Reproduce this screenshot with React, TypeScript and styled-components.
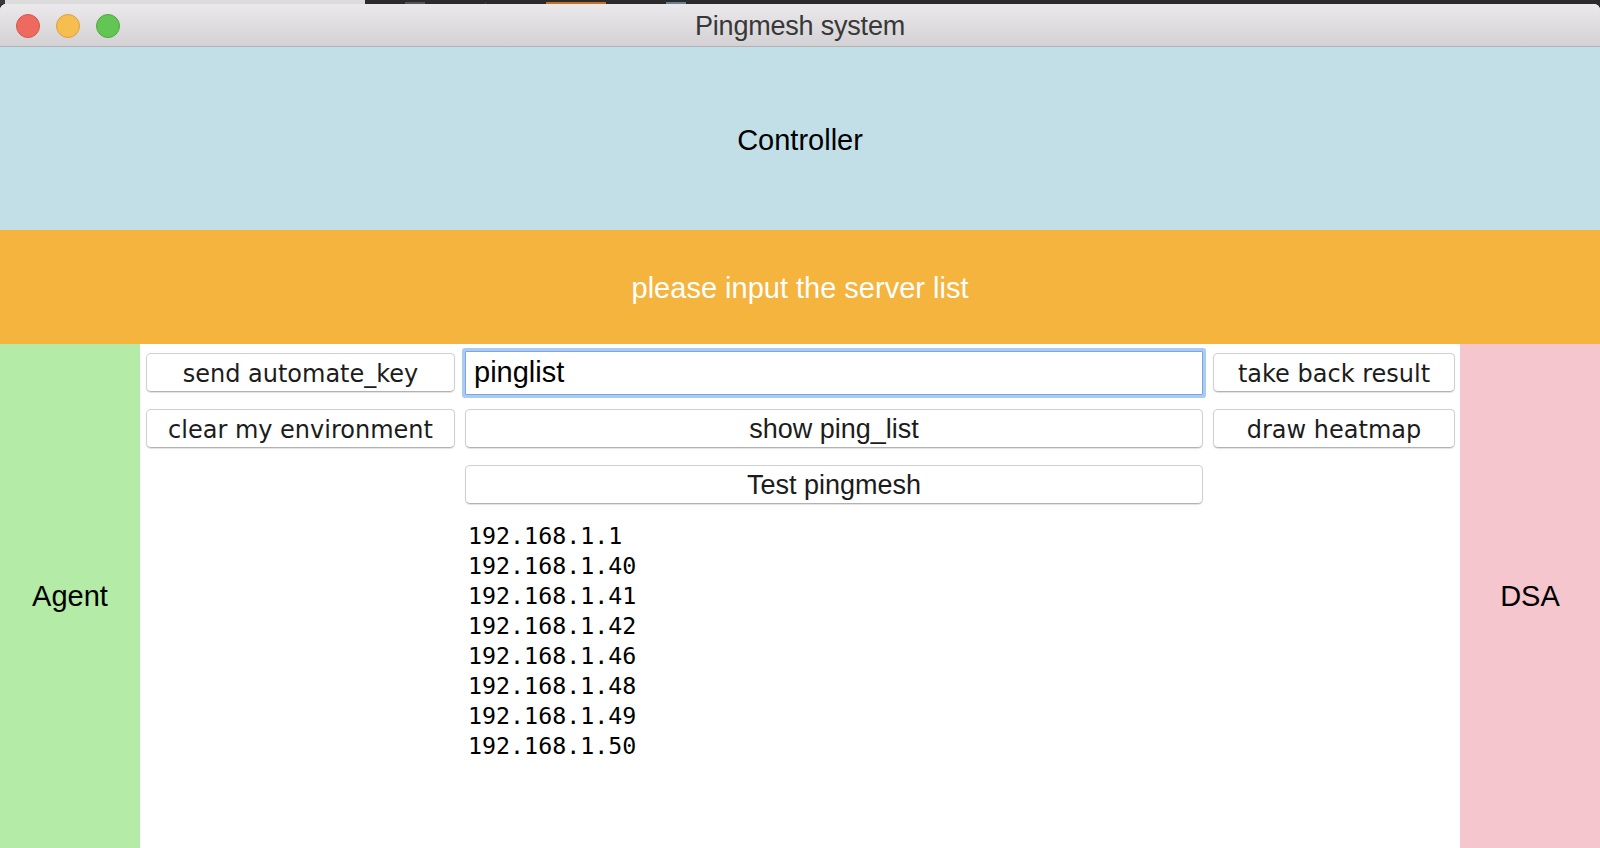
import React from "react";
import styled, { createGlobalStyle } from "styled-components";

const GlobalStyle = createGlobalStyle`
  html, body {
    margin: 0;
    padding: 0;
    width: 1600px;
    height: 848px;
    overflow: hidden;
    background: #2b2b2b;
  }
  #root {
    width: 1600px;
    height: 848px;
  }
  * { box-sizing: border-box; }
`;

const Screen = styled.div`
  width: 1600px;
  height: 848px;
  display: flex;
  flex-direction: column;
  background: #2b2b2b;
`;

const Backdrop = styled.div`
  height: 4px;
  display: flex;
  flex-shrink: 0;
  overflow: hidden;
`;

const BackdropPane = styled.div<{ $light?: boolean; $w?: number }>`
  height: 100%;
  ${(p) => (p.$w ? `width: ${p.$w}px;` : "flex: 1;")}
  background: ${(p) => (p.$light ? "#dcdcdc" : "#2b2b2b")};
  border-left: ${(p) => (p.$light ? "5px solid #3a3a3a" : "none")};
  display: flex;
  align-items: flex-end;
  gap: 60px;
  padding-left: 40px;
`;

const BackdropMark = styled.span<{ $color: string; $w: number }>`
  display: block;
  width: ${(p) => p.$w}px;
  height: 2px;
  background: ${(p) => p.$color};
`;

const Window = styled.div`
  flex: 1;
  display: flex;
  flex-direction: column;
  border-radius: 6px 6px 0 0;
  overflow: hidden;
  background: #ffffff;
`;

const TitleBar = styled.div`
  height: 43px;
  flex-shrink: 0;
  display: grid;
  grid-template-columns: 200px 1fr 200px;
  align-items: center;
  background: linear-gradient(#ebe9eb, #d3d1d3);
  border-bottom: 1px solid #b3b1b3;
`;

const Lights = styled.div`
  display: flex;
  gap: 16px;
  padding: 2px 0 0 16px;
`;

const Light = styled.span<{ $fill: string; $edge: string }>`
  width: 24px;
  height: 24px;
  border-radius: 50%;
  background: ${(p) => p.$fill};
  border: 1px solid ${(p) => p.$edge};
`;

const Title = styled.div`
  text-align: center;
  font-family: "Liberation Sans", Arial, sans-serif;
  font-size: 27px;
  color: #383838;
  letter-spacing: -0.2px;
  padding-top: 3px;
`;

const Band = styled.div<{ $bg: string; $fg: string; $h: number }>`
  height: ${(p) => p.$h}px;
  flex-shrink: 0;
  background: ${(p) => p.$bg};
  color: ${(p) => p.$fg};
  display: flex;
  align-items: center;
  justify-content: center;
  font-family: "Liberation Sans", Arial, sans-serif;
  font-size: 29px;
  padding-top: 3px;
`;

const Body = styled.div`
  flex: 1;
  display: grid;
  grid-template-columns: 140px 1fr 140px;
`;

const SideColumn = styled.div<{ $bg: string }>`
  background: ${(p) => p.$bg};
  display: flex;
  align-items: center;
  justify-content: center;
  font-family: "Liberation Sans", Arial, sans-serif;
  font-size: 29px;
  color: #000;
`;

const Workspace = styled.div`
  background: #fff;
  padding: 4px 5px 0 6px;
  display: grid;
  grid-template-columns: 309px 738px 242px;
  grid-template-rows: 49px 39px 44px auto;
  column-gap: 10px;
  row-gap: 12px;
  align-content: start;
  align-items: center;
  & > :nth-child(1),
  & > :nth-child(4) {
    margin-right: 1px;
  }
`;

const Button = styled.button<{ $variant?: "lucida" | "helv" }>`
  height: 39px;
  width: 100%;
  margin: 0;
  padding: 2px 0 0 0;
  background: #ffffff;
  border: 1px solid #cfcfcf;
  border-bottom-color: #b2b2b2;
  border-radius: 5px;
  box-shadow: 0 1px 1px rgba(0, 0, 0, 0.12);
  color: #1c1c1c;
  font-family: ${(p) =>
    p.$variant === "helv"
      ? `"Liberation Sans", Arial, sans-serif`
      : `"DejaVu Sans", Verdana, sans-serif`};
  font-size: ${(p) => (p.$variant === "helv" ? "27px" : "24px")};
  line-height: 1;
  cursor: default;
`;

const BottomCell = styled.div`
  align-self: end;
`;

const PathInput = styled.input`
  height: 44px;
  width: 738px;
  margin: 0;
  padding: 0 0 0 8px;
  border: 1px solid #7ea6da;
  border-radius: 1px;
  box-shadow: 0 0 0 3px #a9cbf4;
  outline: none;
  background: #fff;
  color: #000;
  font-family: "Liberation Sans", Arial, sans-serif;
  font-size: 29px;
`;

const IpList = styled.pre`
  grid-column: 2;
  margin: 5px 0 0 0;
  padding-left: 3px;
  font-family: "DejaVu Sans Mono", Menlo, monospace;
  font-size: 23.3px;
  line-height: 30px;
  color: #000;
`;

const ips = [
  "192.168.1.1",
  "192.168.1.40",
  "192.168.1.41",
  "192.168.1.42",
  "192.168.1.46",
  "192.168.1.48",
  "192.168.1.49",
  "192.168.1.50",
];

export default function App() {
  return (
    <>
      <GlobalStyle />
      <Screen>
        <Backdrop>
          <BackdropPane $light $w={365} />
          <BackdropPane>
            <BackdropMark $color="#555" $w={20} />
            <BackdropMark $color="#444" $w={1} />
            <BackdropMark $color="#c8701e" $w={60} />
            <BackdropMark $color="#6a7f9a" $w={20} />
          </BackdropPane>
        </Backdrop>
        <Window>
          <TitleBar>
            <Lights>
              <Light $fill="#ee6a5f" $edge="#d8554b" />
              <Light $fill="#f6be4f" $edge="#d9a23c" />
              <Light $fill="#62c554" $edge="#4fa840" />
            </Lights>
            <Title>Pingmesh system</Title>
            <div />
          </TitleBar>
          <Band $bg="#c2dfe8" $fg="#000" $h={183}>
            Controller
          </Band>
          <Band $bg="#f5b43d" $fg="#ffffff" $h={114}>
            please input the server list
          </Band>
          <Body>
            <SideColumn $bg="#b3eba7">Agent</SideColumn>
            <Workspace>
              <Button>send automate_key</Button>
              <PathInput defaultValue="pinglist" />
              <Button>take back result</Button>
              <Button>clear my environment</Button>
              <Button $variant="helv">show ping_list</Button>
              <Button>draw heatmap</Button>
              <div />
              <BottomCell>
                <Button $variant="helv">Test pingmesh</Button>
              </BottomCell>
              <div />
              <IpList>{ips.join("\n")}</IpList>
            </Workspace>
            <SideColumn $bg="#f6c6ce">DSA</SideColumn>
          </Body>
        </Window>
      </Screen>
    </>
  );
}
